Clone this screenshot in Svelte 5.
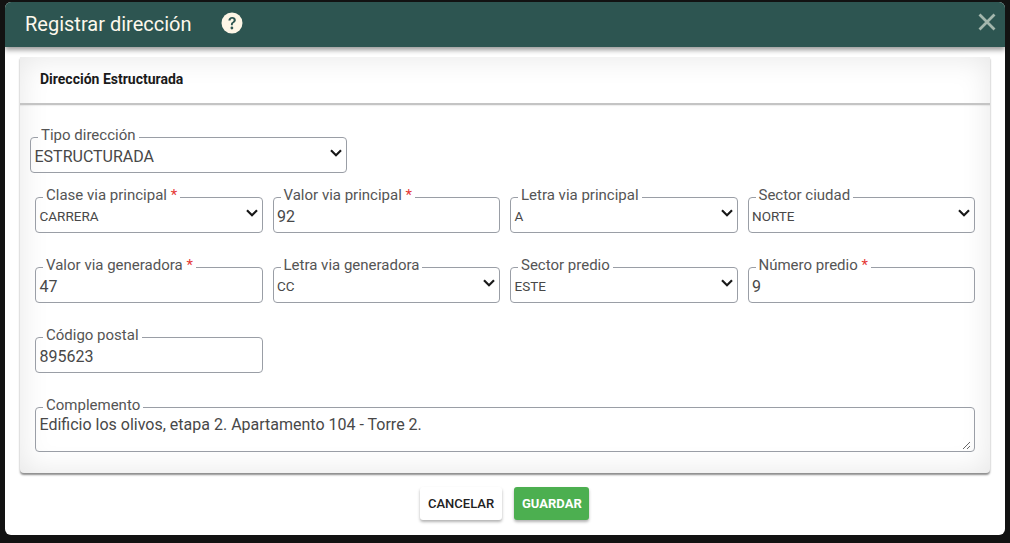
<script>
  const rows = [
    [
      { label: 'Clase via principal', required: true, type: 'select', value: 'CARRERA' },
      { label: 'Valor via principal', required: true, value: '92' },
      { label: 'Letra via principal', type: 'select', value: 'A' },
      { label: 'Sector ciudad', type: 'select', value: 'NORTE' }
    ],
    [
      { label: 'Valor via generadora', required: true, value: '47' },
      { label: 'Letra via generadora', type: 'select', value: 'CC' },
      { label: 'Sector predio', type: 'select', value: 'ESTE' },
      { label: 'Número predio', required: true, value: '9' }
    ],
    [{ label: 'Código postal', value: '895623' }]
  ];
  const fields = rows.flat();
</script>

<div class="dialog">
  <header class="topbar">
    <h1>Registrar dirección</h1>
    <svg class="help" viewBox="0 0 22 22" width="22" height="22" aria-hidden="true">
      <circle cx="11" cy="11" r="10.5" fill="#fdf6e6" />
      <path d="M7.4 8.6c.1-2.3 1.600-3.600 3.800-3.600 2.100 0 3.600 1.200 3.600 3 0 1.300-.6 2.100-1.700 2.800-1 .6-1.300 1-1.300 2v.5H9.900v-.7c0-1.300.4-2 1.500-2.700 1-.6 1.300-1 1.300-1.800 0-.8-.6-1.400-1.500-1.400-1 0-1.600.6-1.700 1.900z" fill="#2d5551" />
      <circle cx="10.900" cy="16" r="1.400" fill="#2d5551" />
    </svg>
    <button class="close" aria-label="Cerrar">
      <svg viewBox="0 0 18 18" width="18" height="18"><path d="M1.500 1.500l15 15M16.500 1.500l-15 15" stroke="#a4b7ad" stroke-width="2.800" fill="none" /></svg>
    </button>
  </header>

  <section class="card">
    <h2>Dirección Estructurada</h2>
    <div class="form">
      <fieldset class="field tipo">
        <legend>Tipo dirección</legend>
        <span class="value big">ESTRUCTURADA</span>
        <svg class="chevron" viewBox="0 0 12 8" width="12" height="8"><path d="M1 1.200l5 5 5-5" stroke="#1a1a1a" stroke-width="2.200" fill="none" /></svg>
      </fieldset>

      <div class="grid">
        {#each fields as f}
          <fieldset class="field">
            <legend>{f.label}{#if f.required}<span class="req">&nbsp;*</span>{/if}</legend>
            {#if f.type === 'select'}
              <span class="value">{f.value}</span>
              <svg class="chevron" viewBox="0 0 12 8" width="12" height="8"><path d="M1 1.200l5 5 5-5" stroke="#1a1a1a" stroke-width="2.200" fill="none" /></svg>
            {:else}
              <span class="value big">{f.value}</span>
            {/if}
          </fieldset>
        {/each}
      </div>

      <fieldset class="field area">
        <legend>Complemento</legend>
        <textarea readonly>Edificio los olivos, etapa 2. Apartamento 104 - Torre 2.</textarea>
      </fieldset>
    </div>
  </section>

  <footer class="actions">
    <button class="btn cancel">CANCELAR</button>
    <button class="btn save">GUARDAR</button>
  </footer>
</div>

<style>
  :global(body) {
    background: #121212;
    font-family: Roboto, "Liberation Sans", sans-serif;
  }

  .dialog {
    width: 1000px;
    height: 533px;
    margin: 2px 5px 0;
    background: #fff;
    border-radius: 6px;
    overflow: hidden;
  }

  .topbar {
    display: flex;
    align-items: center;
    height: 45px;
    padding: 0 9px 0 20px;
    background: #2d5551;
    box-shadow: 0 3px 5px rgba(0, 0, 0, 0.4);
    position: relative;
  }

  h1 {
    margin: -2px 0 0;
    font-size: 20px;
    font-weight: 400;
    color: #fdf8ec;
  }

  .help {
    margin-left: 30px;
    margin-top: -4px;
  }

  .close {
    margin-left: auto;
    display: flex;
    padding: 0;
    background: none;
    border: 0;
    margin-top: -5px;
  }

  .card {
    margin: 10px 15px 0;
    height: 416px;
    border-radius: 0 0 4px 4px;
    background: #fff;
    box-shadow: inset 0 0 30px rgba(0, 0, 0, 0.1), 0 2px 2px rgba(0, 0, 0, 0.45);
    overflow: hidden;
  }

  h2 {
    margin: 0;
    height: 46px;
    line-height: 45px;
    padding-left: 20px;
    font-size: 14px;
    font-weight: 700;
    color: #1a1a1a;
    border-bottom: 2px solid #c4c4c4;
    box-shadow: 0 1px 1px rgba(0, 0, 0, 0.06);
    box-sizing: content-box;
  }

  .form {
    padding: 23px 15px 0 10px;
  }

  .field {
    position: relative;
    margin: 0;
    padding: 0 3.5px 6px;
    min-width: 0;
    height: 45px;
    box-sizing: border-box;
    border: 1px solid #9a9ea6;
    border-radius: 4px;
    display: flex;
    align-items: center;
  }

  legend {
    position: relative;
    top: -2px;
    margin-left: 3.5px;
    padding: 0 3px;
    font-size: 15px;
    line-height: 18px;
    color: #555;
    white-space: nowrap;
  }

  .req {
    color: #e53935;
  }

  .tipo {
    width: 317px;
  }

  .grid {
    display: grid;
    grid-template-columns: repeat(4, 1fr);
    column-gap: 10px;
    row-gap: 25px;
    margin: 15px 0 0 5px;
  }

  .value {
    font-size: 13.5px;
    color: #484848;
  }

  .value.big {
    font-size: 16px;
  }

  .chevron {
    position: absolute;
    right: 4px;
    top: 3px;
  }

  .area {
    display: block;
    height: 54px;
    margin: 25px 0 0 5px;
    padding-bottom: 0;
  }

  textarea {
    display: block;
    width: 100%;
    height: 35px;
    padding: 0;
    margin: -1px 0 0;
    border: 0;
    outline: 0;
    background: transparent;
    font: 16px Roboto, sans-serif;
    color: #484848;
    resize: vertical;
    box-sizing: border-box;
  }

  .actions {
    display: flex;
    justify-content: center;
    gap: 12px;
    padding: 14px 1px 0 0;
  }

  .btn {
    height: 33px;
    padding: 0 8px;
    border: 0;
    border-radius: 3px;
    font: 500 13px Roboto, sans-serif;
    box-shadow: 0 2px 3px rgba(0, 0, 0, 0.3);
  }

  .cancel {
    background: #fff;
    color: #222;
    width: 82px;
  }

  .save {
    background: #4caf50;
    color: #fff;
    font-weight: 700;
    width: 75px;
  }
</style>
